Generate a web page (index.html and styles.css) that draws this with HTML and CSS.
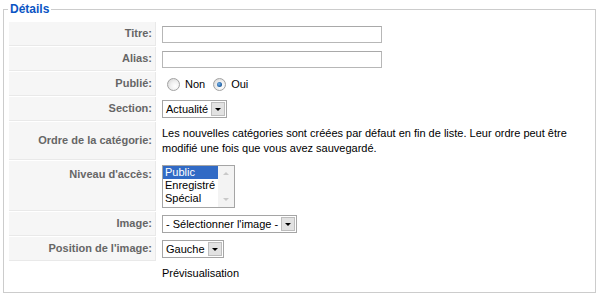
FILE: index.html
```html
<!DOCTYPE html>
<html lang="fr">
<head>
    <meta charset="UTF-8">
    <title>Détails</title>
    <link rel="stylesheet" href="styles.css">
</head>
<body>
    <fieldset class="adminform">
        <legend>Détails</legend>
        <table class="admintable">
            <tr>
                <td class="key"><label for="title">Titre:</label></td>
                <td class="value"><input class="inputbox" type="text" id="title"></td>
            </tr>
            <tr>
                <td class="key"><label for="alias">Alias:</label></td>
                <td class="value"><input class="inputbox" type="text" id="alias"></td>
            </tr>
            <tr>
                <td class="key">Publié:</td>
                <td class="value">
                    <span class="radios">
                        <span class="radio"></span><span class="radio-label">Non</span>
                        <span class="radio checked"></span><span class="radio-label">Oui</span>
                    </span>
                </td>
            </tr>
            <tr>
                <td class="key">Section:</td>
                <td class="value">
                    <span class="select"><span class="select-text">Actualité</span><span class="select-btn"></span></span>
                </td>
            </tr>
            <tr>
                <td class="key">Ordre de la catégorie:</td>
                <td class="value text">Les nouvelles catégories sont créées par défaut en fin de liste. Leur ordre peut être modifié une fois que vous avez sauvegardé.</td>
            </tr>
            <tr>
                <td class="key top">Niveau d'accès:</td>
                <td class="value">
                    <div class="listbox">
                        <ul class="list-items">
                            <li class="selected">Public</li>
                            <li>Enregistré</li>
                            <li>Spécial</li>
                        </ul>
                        <div class="scrollbar">
                            <span class="arrow up"></span>
                            <span class="arrow down"></span>
                        </div>
                    </div>
                </td>
            </tr>
            <tr>
                <td class="key">Image:</td>
                <td class="value">
                    <span class="select"><span class="select-text">- Sélectionner l'image -</span><span class="select-btn"></span></span>
                </td>
            </tr>
            <tr>
                <td class="key">Position de l'image:</td>
                <td class="value">
                    <span class="select"><span class="select-text">Gauche</span><span class="select-btn"></span></span>
                </td>
            </tr>
            <tr>
                <td class="empty"></td>
                <td class="value">Prévisualisation</td>
            </tr>
        </table>
    </fieldset>
</body>
</html>
```

FILE: styles.css
```css
body {
    margin: 0;
    padding: 0;
    font-family: "Liberation Sans", Arial, sans-serif;
    font-size: 11px;
    color: #000;
    background-color: #fff;
}

.adminform {
    margin: 0 1px 0 3px;
    padding: 3px 4px 6px 4px;
    border: 1px solid #ccc;
}

.adminform legend {
    padding: 0 2px;
    color: #0B55C4;
    font-size: 12px;
    font-weight: bold;
    line-height: 18px;
}

.admintable {
    width: 100%;
    border-collapse: separate;
    border-spacing: 1px;
}

.admintable td {
    padding: 3px;
    vertical-align: middle;
    line-height: 17px;
}

.admintable td.key {
    width: 140px;
    background-color: #f6f6f6;
    border-bottom: 1px solid #e9e9e9;
    border-right: 1px solid #e9e9e9;
    text-align: right;
    color: #666;
    font-weight: bold;
}

.admintable td.top {
    vertical-align: top;
    padding-top: 5px;
}

.admintable td.value {
    padding-left: 5px;
}

.admintable td.text {
    line-height: 15px;
    padding-top: 4px;
    padding-bottom: 4px;
}

.inputbox {
    display: block;
    width: 220px;
    height: 17px;
    margin: 0;
    padding: 0 2px;
    box-sizing: border-box;
    border: 1px solid #b7b7b7;
    border-top-color: #a9a9a9;
    font: inherit;
}

/* boutons radio */
.radios {
    display: flex;
    align-items: center;
    height: 17px;
    padding-left: 5px;
}

.radio {
    position: relative;
    width: 11px;
    height: 11px;
    border: 1px solid #a2a2a2;
    border-radius: 50%;
    background: radial-gradient(circle at 65% 65%, #ffffff 0%, #f0f0f0 45%, #cfcfcf 100%);
}

.radio.checked::after {
    content: "";
    position: absolute;
    left: 3px;
    top: 3px;
    width: 5px;
    height: 5px;
    border-radius: 50%;
    background: radial-gradient(circle at 40% 40%, #7fb7e8 0%, #2a6cb0 55%, #0d3a6b 100%);
}

.radio-label {
    margin: 0 8px 0 5px;
}

/* listes déroulantes */
.select {
    display: inline-flex;
    align-items: center;
    height: 18px;
    box-sizing: border-box;
    border: 1px solid #a5a5a5;
    background-color: #fff;
    vertical-align: middle;
}

.select-text {
    padding: 0 3px;
    line-height: 16px;
    font-size: 11px;
}

.select-btn {
    position: relative;
    width: 14px;
    height: 14px;
    margin-right: 1px;
    box-sizing: border-box;
    border: 1px solid #bdbdbd;
    background-color: #e2e2e2;
}

.select-btn::after {
    content: "";
    position: absolute;
    left: 3px;
    top: 5px;
    border-left: 3px solid transparent;
    border-right: 3px solid transparent;
    border-top: 3px solid #000;
}

.listbox {
    display: flex;
    width: 73px;
    height: 43px;
    box-sizing: border-box;
    border: 1px solid #a5a5a5;
    margin-top: 1px;
}

.list-items {
    flex: 1;
    margin: 0;
    padding: 0;
    list-style: none;
}

.list-items li {
    height: 13px;
    line-height: 13px;
    padding-left: 2px;
}

.list-items li.selected {
    background-color: #316ac5;
    color: #fff;
}

.scrollbar {
    position: relative;
    width: 16px;
    background-color: #f3f3f3;
}

.arrow {
    position: absolute;
    left: 5px;
    border-left: 3px solid transparent;
    border-right: 3px solid transparent;
}

.arrow.up {
    top: 6px;
    border-bottom: 3px solid #c9c9c9;
}

.arrow.down {
    bottom: 6px;
    border-top: 3px solid #c9c9c9;
}
```
